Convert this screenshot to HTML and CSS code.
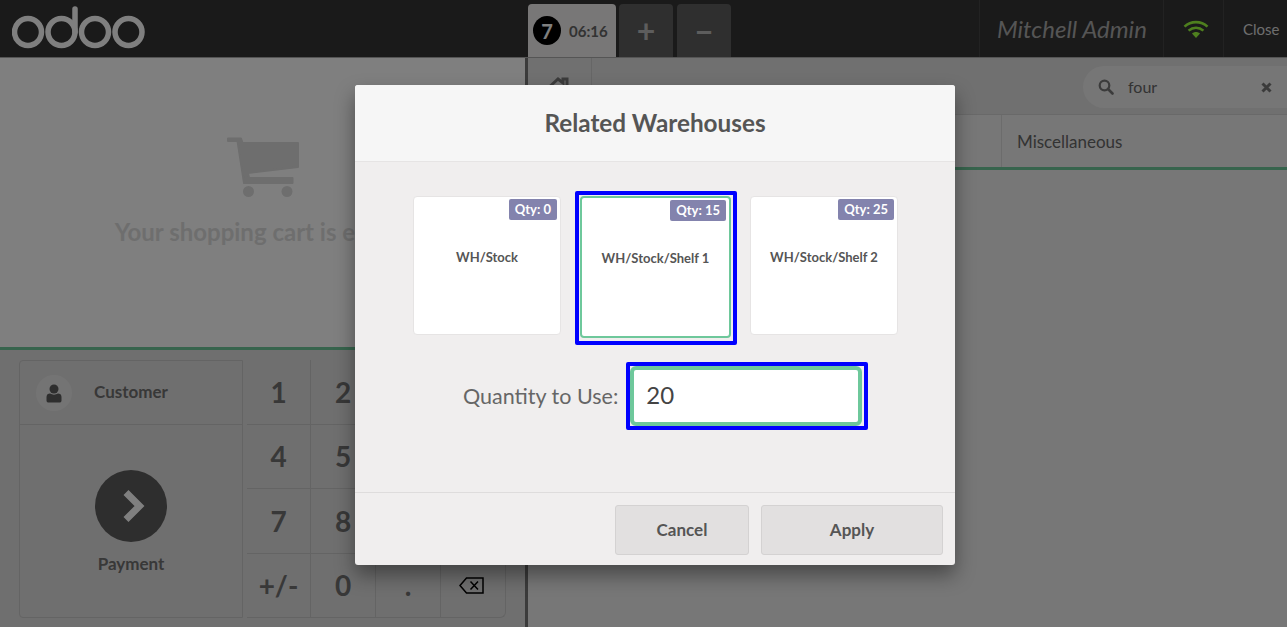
FILE: index.html
```html
<!DOCTYPE html>
<html lang="en">
<head>
    <meta charset="UTF-8">
    <meta name="viewport" content="width=device-width, initial-scale=1.0">
    <title>Point of Sale</title>
    <link rel="stylesheet" href="styles.css">
</head>
<body>
    <div class="app">
        <header class="topbar">
            <div class="logo">
                <svg width="140" height="50" viewBox="0 0 140 50">
                    <g fill="none" stroke="#ffffff" stroke-width="5.5">
                        <circle cx="16" cy="32" r="13.5"/>
                        <circle cx="49.5" cy="32" r="13.5"/>
                        <circle cx="83" cy="32" r="13.5"/>
                        <circle cx="116.5" cy="32" r="13.5"/>
                        <path d="M63 32V9" stroke-linecap="round"/>
                    </g>
                </svg>
            </div>
            <div class="tabs">
                <div class="tab tab-active">
                    <span class="tab-number">7</span>
                    <span class="tab-time">06:16</span>
                </div>
                <div class="tab tab-action">+</div>
                <div class="tab tab-action">−</div>
            </div>
            <div class="status">
                <div class="status-cell status-user">Mitchell Admin</div>
                <div class="status-cell status-wifi">
                    <svg width="26" height="20" viewBox="0 0 26 20">
                        <g fill="none" stroke="#9cff3c" stroke-width="2.6">
                            <path d="M1.5 7.6C8 1.6 18 1.6 24.5 7.6"/>
                            <path d="M5.6 11.6C10 7.7 16 7.7 20.4 11.6"/>
                        </g>
                        <path d="M9 14.6C11.4 12.6 14.6 12.6 17 14.6L13 19Z" fill="#9cff3c"/>
                    </svg>
                </div>
                <div class="status-cell status-close">Close</div>
            </div>
        </header>

        <main class="panes">
            <section class="left-pane">
                <div class="cart">
                    <svg class="cart-icon" width="74" height="62" viewBox="0 0 74 62">
                        <path d="M2 2.5H15L16.6 7H72V31L22 37L23 42H66.5V47H18L11.5 5H2Z" fill="#dcdcdc" stroke="#dcdcdc" stroke-width="2" stroke-linejoin="round"/>
                        <circle cx="22.5" cy="55.500" r="5.500" fill="#dcdcdc"/>
                        <circle cx="61" cy="55.500" r="5.500" fill="#dcdcdc"/>
                    </svg>
                    <p class="cart-empty">Your shopping cart is empty</p>
                </div>
                <div class="controls">
                    <div class="actionpad">
                        <div class="customer">
                            <span class="avatar">
                                <svg width="16" height="19" viewBox="0 0 16 19">
                                    <circle cx="8" cy="5" r="4.500" fill="#5c5c5c"/>
                                    <path d="M0.500 13C0.500 10.500 2 9.500 4 9.500C6.500 11 9.500 11 12 9.500C14 9.500 15.500 10.500 15.500 13V16.500C15.500 18 14.500 18.500 13.500 18.500H2.500C1.500 18.500 0.500 18 0.500 16.500Z" fill="#5c5c5c"/>
                                </svg>
                            </span>
                            <span class="customer-name">Customer</span>
                        </div>
                        <div class="payment">
                            <span class="payment-circle">
                                <svg width="26" height="36" viewBox="0 0 26 36">
                                    <path d="M5 4.500L18.500 18L5 31.500" fill="none" stroke="#ffffff" stroke-width="7"/>
                                </svg>
                            </span>
                            <span class="payment-label">Payment</span>
                        </div>
                    </div>
                    <div class="numpad">
                        <div class="key">1</div><div class="key">2</div><div class="key"></div><div class="key"></div>
                        <div class="key">4</div><div class="key">5</div><div class="key"></div><div class="key"></div>
                        <div class="key">7</div><div class="key">8</div><div class="key"></div><div class="key"></div>
                        <div class="key">+/-</div><div class="key">0</div><div class="key">.</div>
                        <div class="key">
                            <svg class="key-delete" width="25" height="17" viewBox="0 0 25 17">
                                <path d="M7.500 1H24V16H7.500L1 8.500Z" fill="none" stroke="#000" stroke-width="1.500"/>
                                <path d="M11.500 4.500L19 12.500M19 4.500L11.500 12.500" fill="none" stroke="#000" stroke-width="1.500"/>
                            </svg>
                        </div>
                    </div>
                </div>
            </section>

            <section class="right-pane">
                <div class="search-row">
                    <div class="home-cell">
                        <svg width="30" height="26" viewBox="0 0 30 26">
                            <path d="M1 14L13 3L18 7V3H22V10.500L27 14" fill="none" stroke="#777" stroke-width="3"/>
                            <path d="M5 16L13 9L21 16V25H5Z" fill="#777"/>
                        </svg>
                    </div>
                    <div class="search-box">
                        <svg width="16" height="16" viewBox="0 0 16 16">
                            <circle cx="6.500" cy="6.500" r="4.800" fill="none" stroke="#777" stroke-width="2.200"/>
                            <path d="M10 10L14.500 14.500" stroke="#777" stroke-width="2.600" stroke-linecap="round"/>
                        </svg>
                        <span class="search-text">four</span>
                        <span class="search-clear">
                            <svg width="11" height="11" viewBox="0 0 11 11">
                                <path d="M1.500 1.500L9.500 9.500M9.500 1.500L1.500 9.500" stroke="#777" stroke-width="3"/>
                            </svg>
                        </span>
                    </div>
                </div>
                <div class="category-row">
                    <div class="category">Miscellaneous</div>
                </div>
            </section>
        </main>

        <div class="overlay"></div>

        <div class="popup">
            <h2 class="popup-title">Related Warehouses</h2>
            <div class="popup-body">
                <div class="cards">
                    <div class="card">
                        <span class="qty">Qty: 0</span>
                        <span class="card-name">WH/Stock</span>
                    </div>
                    <div class="card card-selected">
                        <span class="qty">Qty: 15</span>
                        <span class="card-name">WH/Stock/Shelf 1</span>
                    </div>
                    <div class="card">
                        <span class="qty">Qty: 25</span>
                        <span class="card-name">WH/Stock/Shelf 2</span>
                    </div>
                </div>
                <div class="qty-row">
                    <label class="qty-label" for="qtyInput">Quantity to Use:</label>
                    <div class="qty-field">
                        <input class="qty-input" id="qtyInput" type="text" value="20">
                    </div>
                </div>
            </div>
            <div class="popup-footer">
                <button class="btn btn-cancel" type="button">Cancel</button>
                <button class="btn btn-apply" type="button">Apply</button>
            </div>
        </div>
    </div>
</body>
</html>
```

FILE: styles.css
```css
* {
    box-sizing: border-box;
}
body {
    margin: 0;
    font-family: Lato, "Open Sans", sans-serif;
    color: #555;
    overflow: hidden;
}
.app {
    position: relative;
    width: 1287px;
    height: 627px;
    overflow: hidden;
    display: flex;
    flex-direction: column;
}

/* top bar */
.topbar {
    display: flex;
    height: 57px;
    background: #343434;
}
.logo {
    width: 528px;
    padding-left: 12px;
}
.tabs {
    display: flex;
    gap: 3px;
    padding-top: 4px;
}
.tab {
    display: flex;
    align-items: center;
    height: 53px;
    border-radius: 4px 4px 0 0;
}
.tab-active {
    width: 88px;
    padding-left: 5px;
    gap: 8px;
    background: #f0eeee;
}
.tab-number {
    display: flex;
    align-items: center;
    justify-content: center;
    width: 28px;
    height: 29px;
    border-radius: 50%;
    background: #000;
    color: #fff;
    font-size: 20px;
    font-weight: 700;
}
.tab-time {
    font-size: 15px;
    font-weight: 700;
    color: #666;
}
.tab-action {
    width: 54px;
    justify-content: center;
    margin-right: 1px;
    background: #5e5e5e;
    color: #bbb;
    font-size: 32px;
    font-weight: 700;
}
.status {
    display: flex;
    margin-left: auto;
}
.status-cell {
    display: flex;
    align-items: center;
    border-left: 1px solid #444;
}
.status-user {
    width: 184px;
    padding-left: 17px;
    font-size: 24px;
    font-style: italic;
    color: #aaa;
}
.status-wifi {
    width: 60px;
    padding-left: 5px;
    justify-content: center;
}
.status-close {
    width: 64px;
    padding-left: 19px;
    font-size: 15px;
    color: #ddd;
}

/* panes */
.panes {
    display: flex;
    flex: 1;
    border-top: 1px solid #aaa;
}
.left-pane {
    display: flex;
    flex-direction: column;
    width: 528px;
    border-right: 3px solid #777;
}
.cart {
    display: flex;
    flex-direction: column;
    align-items: center;
    height: 292px;
    padding: 78px 0 0 0;
    background: #fff;
    border-bottom: 3px solid #6ec89b;
}
.cart-empty {
    margin: 19px 0 0 0;
    font-size: 24px;
    font-weight: 700;
    color: #ddd;
}
.controls {
    display: flex;
    flex: 1;
    padding: 10px 0 9px 19px;
    background: #dfdede;
}
.actionpad {
    flex: none;
    width: 224px;
    border: 1px solid #c8c8c8;
    border-radius: 4px 0 0 4px;
    display: flex;
    flex-direction: column;
}
.customer {
    display: flex;
    align-items: center;
    height: 64px;
    padding-left: 16px;
    border-bottom: 1px solid #c8c8c8;
}
.avatar {
    display: flex;
    align-items: center;
    justify-content: center;
    width: 36px;
    height: 36px;
    margin-top: 1px;
    border-radius: 50%;
    background: #e9e9e9;
}
.customer-name {
    margin-left: 22px;
    margin-bottom: 2px;
    font-size: 17px;
    font-weight: 700;
    color: #707070;
}
.payment {
    display: flex;
    flex-direction: column;
    align-items: center;
    flex: 1;
    padding-top: 45px;
}
.payment-circle {
    display: flex;
    align-items: center;
    justify-content: center;
    width: 72px;
    height: 72px;
    padding-left: 5px;
    border-radius: 50%;
    background: #5c5c5c;
}
.payment-label {
    margin-top: 11px;
    font-size: 17px;
    font-weight: 700;
    color: #707070;
}
.numpad {
    display: grid;
    grid-template-columns: 64px 65px 65px 65px;
    grid-template-rows: repeat(4, 64.500px);
    margin-left: 4px;
}
.key {
    display: flex;
    align-items: center;
    justify-content: center;
    border-right: 1px solid #c8c8c8;
    border-bottom: 1px solid #c8c8c8;
    font-size: 28px;
    font-weight: 700;
    color: #707070;
}
.key:last-child {
    border-radius: 0 0 6px 0;
}
.key-delete {
    margin-right: 3px;
}

/* right side */
.right-pane {
    flex: 1;
    background: #eeeeee;
}
.search-row {
    display: flex;
    justify-content: space-between;
    height: 57px;
    background: #e0e0e0;
    border-bottom: 1px solid #d2d2d2;
}
.home-cell {
    display: flex;
    justify-content: center;
    width: 64px;
    padding-top: 18px;
    border-right: 1px solid #cccccc;
}
.search-box {
    display: flex;
    align-items: center;
    width: 204px;
    height: 42px;
    margin-top: 8px;
    padding-left: 15px;
    border-radius: 21px 0 0 21px;
    background: #ececec;
}
.search-text {
    margin-left: 14px;
    margin-bottom: 1px;
    font-size: 16px;
    color: #666;
}
.search-clear {
    display: flex;
    margin-left: auto;
    margin-right: 15px;
}
.category-row {
    display: flex;
    justify-content: flex-end;
    height: 55px;
    border-bottom: 3px solid #6ec89b;
}
.category {
    display: flex;
    align-items: center;
    width: 286px;
    padding-left: 15px;
    border-left: 1px solid #d8d8d8;
    font-size: 17px;
    color: #666;
}

/* popup over the page */
.overlay {
    position: absolute;
    inset: 0;
    background: rgba(0,0,0,0.5);
}
.popup {
    position: absolute;
    left: 355px;
    top: 85px;
    display: flex;
    flex-direction: column;
    width: 600px;
    height: 480px;
    border-radius: 3px;
    background: #f0eeee;
    box-shadow: 0 10px 20px rgba(0,0,0,0.4);
}
.popup-title {
    height: 77px;
    margin: 0;
    padding-top: 23px;
    border-bottom: 1px solid #e6e4e4;
    border-radius: 3px 3px 0 0;
    background: #f6f6f6;
    text-align: center;
    font-size: 24.3px;
    font-weight: 700;
    color: #555;
}
.popup-body {
    flex: 1;
    padding: 34px 0 0 58px;
}
.cards {
    display: flex;
    align-items: flex-start;
    gap: 19px;
}
.card {
    position: relative;
    width: 148px;
    height: 139px;
    padding-top: 49px;
    border: 1px solid #e6e4e4;
    border-radius: 4px;
    background: #fff;
    text-align: center;
    line-height: 20px;
}
.card-selected {
    width: 151px;
    height: 142px;
    border: 2px solid #6ec89b;
}
.card-selected::after {
    content: "";
    position: absolute;
    inset: -7px -8px -9px -7px;
    border: 4px solid #0000ff;
    border-radius: 2px;
}
.qty {
    position: absolute;
    top: 2px;
    right: 3px;
    padding: 0 6px;
    height: 21px;
    line-height: 21px;
    border-radius: 2px;
    background: #8383ad;
    color: #fff;
    font-size: 13px;
    font-weight: 700;
}
.card-name {
    font-size: 13px;
    font-weight: 700;
    color: #555;
}
.qty-row {
    display: flex;
    align-items: center;
    gap: 12px;
    margin-top: 28px;
    padding-left: 50px;
}
.qty-label {
    margin-bottom: 1px;
    font-size: 21.5px;
    color: #666;
}
.qty-field {
    position: relative;
}
.qty-field::after {
    content: "";
    position: absolute;
    inset: -4px -6px -4px -4px;
    border: 4px solid #0000ff;
    border-radius: 2px;
    pointer-events: none;
}
.qty-input {
    display: block;
    width: 232px;
    height: 60px;
    padding: 0 12px 3px 12px;
    border: 4px solid #6ec89b;
    border-radius: 6px;
    background: #fff;
    font-family: Lato, sans-serif;
    font-size: 24px;
    color: #444;
    outline: none;
}
.popup-footer {
    display: flex;
    justify-content: flex-end;
    gap: 12px;
    height: 73px;
    padding: 12px 12px 0 0;
    border-top: 1px solid #dedcdc;
}
.btn {
    height: 50px;
    padding-bottom: 2px;
    border: 1px solid #d4d2d2;
    border-radius: 3px;
    background: #e2e0e0;
    font-family: Lato, sans-serif;
    font-size: 17px;
    font-weight: 700;
    color: #555;
}
.btn-cancel {
    width: 134px;
}
.btn-apply {
    width: 182px;
}
```
